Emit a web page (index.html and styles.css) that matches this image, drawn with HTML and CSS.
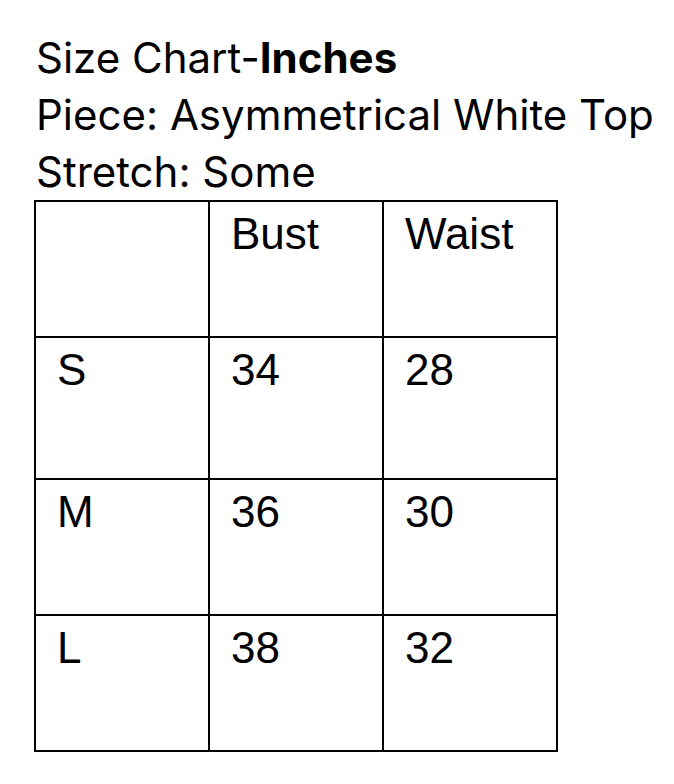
FILE: index.html
```html
<!DOCTYPE html>
<html>
<head>
<meta charset="utf-8">
<link rel="stylesheet" href="styles.css">
</head>
<body>
<div class="page">
  <div class="heading">
    <div class="line">Size Chart-<b>Inches</b></div>
    <div class="line">Piece: Asymmetrical White Top</div>
    <div class="line">Stretch: Some</div>
  </div>
  <table class="chart">
    <tr class="r-head"><td></td><td>Bust</td><td>Waist</td></tr>
    <tr class="r-s"><td>S</td><td>34</td><td>28</td></tr>
    <tr class="r-m"><td>M</td><td>36</td><td>30</td></tr>
    <tr class="r-l"><td>L</td><td>38</td><td>32</td></tr>
  </table>
</div>
</body>
</html>
```
FILE: styles.css
```css
html, body {
  margin: 0;
  padding: 0;
  background: #fff;
}
.page {
  padding: 29px 0 0 34px;
  color: #000;
}
.heading {
  font-family: "Inter", "Liberation Sans", sans-serif;
  font-size: 42px;
  line-height: 57px;
  letter-spacing: 0;
  padding-left: 2px;
}
.heading b {
  font-weight: 700;
}
.chart {
  border-collapse: collapse;
  table-layout: fixed;
  width: 524px;
  font-family: "Liberation Sans", Arial, sans-serif;
  font-size: 44px;
  line-height: 50px;
}
.chart td {
  border: 2px solid #000;
  width: 33.33%;
  padding: 7px 0 0 21px;
  vertical-align: top;
}
.r-head td { height: 127px; }
.r-s td { height: 133px; }
.r-m td { height: 127px; }
.r-l td { height: 127px; }
```
